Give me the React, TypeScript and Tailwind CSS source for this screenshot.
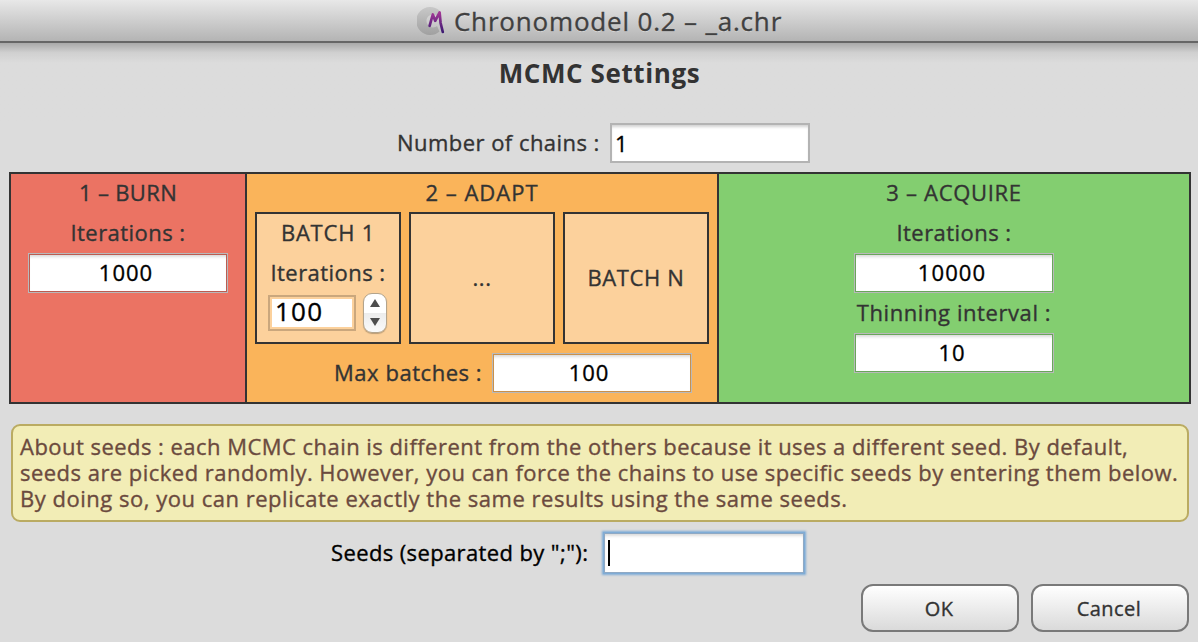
import type { ReactNode } from "react";

function Label({ children, className = "" }: { children: ReactNode; className?: string }) {
  return (
    <div className={`flex items-center justify-center whitespace-nowrap pb-0.5 text-[22px] leading-[38px] text-[#333333] ${className}`}>
      {children}
    </div>
  );
}

function PhaseField({ value, className = "" }: { value: string; className?: string }) {
  return (
    <div className={`h-10 w-[200px] shrink-0 border border-[#b9b9bb] ${className}`}>
      <input
        className="block size-full border border-inherit bg-white pb-0.5 pr-1 text-center text-[22px] text-black shadow-[inset_0_4px_3px_-2px_rgba(0,0,0,0.14)] outline-none"
        defaultValue={value}
      />
    </div>
  );
}

function Logo() {
  return (
    <svg className="h-[30px] w-7" viewBox="0 0 28 30" fill="none">
      <defs>
        <linearGradient id="ring" x1="0" y1="0" x2="0" y2="1">
          <stop offset="0" stopColor="#c8c8c8" />
          <stop offset="1" stopColor="#a0a0a0" />
        </linearGradient>
        <linearGradient id="mark" x1="0" y1="0" x2="0" y2="1">
          <stop offset="0" stopColor="#a33796" />
          <stop offset="1" stopColor="#3d1a72" />
        </linearGradient>
      </defs>
      <path
        d="M22.500 4.500A14 14 0 1 0 22.500 25.500L20 20C17 22.500 12.500 21.500 10.500 18.500C8.500 15 9.500 11.500 12.500 9.500C15 8 18 8.500 20 10Z"
        fill="url(#ring)"
      />
      <path
        d="M12.600 19.800L15.800 8.500L18.200 14.800L22.600 6.500L23.600 17L25.800 26"
        stroke="url(#mark)"
        strokeWidth="2.700"
        strokeLinecap="round"
        strokeLinejoin="round"
      />
    </svg>
  );
}

function BatchBox({ children }: { children: ReactNode }) {
  return <div className="h-[132px] w-[146px] border-2 border-[#333333] bg-[#fcd19c]">{children}</div>;
}

function Stepper() {
  return (
    <button className="flex h-10 w-6 flex-col items-center justify-between rounded-[9px] border border-[#b3a48c] bg-linear-to-b from-white from-50% via-[#ececec] via-50% to-[#fafafa] pb-1.5 pt-[5px] shadow-[0_1px_1px_rgba(0,0,0,0.25)]">
      <svg className="h-2 w-2.5" viewBox="0 0 10 8"><path d="M0 8L5 0L10 8Z" fill="#4d4d4d" /></svg>
      <svg className="h-2 w-2.5" viewBox="0 0 10 8"><path d="M0 0L5 8L10 0Z" fill="#4d4d4d" /></svg>
    </button>
  );
}

function DialogButton({ children }: { children: ReactNode }) {
  return (
    <button className="h-12 w-[158px] rounded-[12px] border-2 border-[#797979] bg-linear-to-b from-white to-[#dadada] pr-0.5 pt-px text-[20px] tracking-[0.450px] text-[#333333]">
      {children}
    </button>
  );
}

export default function App() {
  return (
    <main className="flex h-[642px] w-[1198px] flex-col overflow-hidden bg-[#dcdcdc] font-['Open_Sans',sans-serif] [-webkit-text-stroke:0.35px]">
      <header className="flex h-[43px] shrink-0 items-center justify-center gap-[9px] border-b-2 border-[#666666] bg-linear-to-b from-[#e8e8e8] to-[#b4b4b4] pl-px">
        <Logo />
        <h1 className="whitespace-nowrap text-[26px] leading-10 tracking-[0.820px] text-[#404040] [text-shadow:0_1px_0_rgba(255,255,255,0.4)]">
          Chronomodel 0.2 – _a.chr
        </h1>
      </header>

      <section className="flex h-[80px] shrink-0 justify-center bg-linear-to-b from-[#a9a9a9] via-[#d0d0d0] via-12% to-[#dcdcdc] to-25% pt-[10px]">
        <h2 className="pl-px text-[26px] font-bold leading-10 tracking-[0.600px] text-[#333333] [-webkit-text-stroke:0px]">MCMC Settings</h2>
      </section>

      <div className="flex h-10 shrink-0 items-center pl-[397px]">
        <Label className="w-[213px] !justify-start tracking-[0.460px]">Number of chains :</Label>
        <input
          className="h-10 w-[200px] border-2 border-[#b3b3b3] bg-white px-[3px] text-[22px] text-black shadow-[inset_0_3px_3px_-1px_rgba(0,0,0,0.18)] outline-none"
          defaultValue="1"
        />
      </div>

      <section className="mx-[9px] mr-[7px] mt-[9px] flex h-[232px] shrink-0 border-2 border-[#333333]">
        <div className="flex w-[234px] flex-col items-center bg-[#eb7363]">
          <Label className="-mt-px tracking-[0.350px]">1 – BURN</Label>
          <Label className="tracking-[0.450px]">Iterations :</Label>
          <PhaseField value="1000" className="tracking-[1px] [&>input]:border-[#bd5c50]" />
        </div>

        <div className="flex w-[474px] flex-col items-center border-x-2 border-[#333333] bg-[#fab45a]">
          <Label className="-mt-px h-[39px] tracking-[1px]">2 – ADAPT</Label>
          <div className="flex gap-2">
            <BatchBox>
              <Label className="-mt-px tracking-[0.800px]">BATCH 1</Label>
              <Label className="tracking-[0.450px]">Iterations :</Label>
              <div className="flex items-center gap-[7px] pl-[11px]">
                <div className="h-9 w-[88px] border-2 border-[#caa77d] p-0.5">
                  <input
                    className="block h-7 w-full bg-white pb-1 pl-[3px] text-[26px] leading-6 tracking-[1.200px] text-black outline-none"
                    defaultValue="100"
                  />
                </div>
                <Stepper />
              </div>
            </BatchBox>
            <BatchBox>
              <Label className="h-full tracking-[0.500px]">...</Label>
            </BatchBox>
            <BatchBox>
              <Label className="h-full tracking-[0.650px]">BATCH N</Label>
            </BatchBox>
          </div>
          <div className="mt-[9px] flex w-full pl-[87px]">
            <Label className="w-[158px] !justify-start tracking-[0.540px]">Max batches :</Label>
            <PhaseField value="100" className="tracking-[1px] [&>input]:border-[#cb9149] [&>input]:pr-1.5" />
          </div>
        </div>

        <div className="flex flex-1 flex-col items-center bg-[#83ce70]">
          <Label className="-mt-px tracking-[0.680px]">3 – ACQUIRE</Label>
          <Label className="tracking-[0.450px]">Iterations :</Label>
          <PhaseField value="10000" className="tracking-[1.100px] [&>input]:border-[#69a65a]" />
          <Label className="tracking-[0.580px]">Thinning interval :</Label>
          <PhaseField value="10" className="tracking-[0.900px] [&>input]:border-[#69a65a]" />
        </div>
      </section>

      <section className="mx-[11px] mr-[9px] mt-5 h-[98px] shrink-0 whitespace-nowrap rounded-[9px] border-2 border-[#baab62] bg-[#f2edb6] pl-[7px] pt-[7px] text-[22px] leading-[26px] text-[#6b4a3e]">
        <p className="tracking-[0.465px]">
          About seeds : each MCMC chain is different from the others because it uses a different seed. By default,
        </p>
        <p className="tracking-[0.472px]">
          seeds are picked randomly. However, you can force the chains to use specific seeds by entering them below.
        </p>
        <p className="tracking-[0.515px]">By doing so, you can replicate exactly the same results using the same seeds.</p>
      </section>

      <div className="mt-[11px] flex h-10 shrink-0 items-center pl-[331px]">
        <Label className="w-[273px] !justify-start !text-black tracking-[0.380px]">Seeds (separated by ";"):</Label>
        <div className="flex h-10 w-[200px] items-center border border-[#8fa9c4] bg-white pl-[3px] shadow-[0_0_0_1px_#7facd6,0_0_2px_2px_#7facd6,inset_0_3px_3px_-1px_rgba(0,0,0,0.14)]">
          <span className="h-[26px] w-0.5 bg-black" />
        </div>
      </div>

      <footer className="mt-[11px] flex shrink-0 justify-end gap-3 pr-[9px]">
        <DialogButton>OK</DialogButton>
        <DialogButton>Cancel</DialogButton>
      </footer>
    </main>
  );
}
